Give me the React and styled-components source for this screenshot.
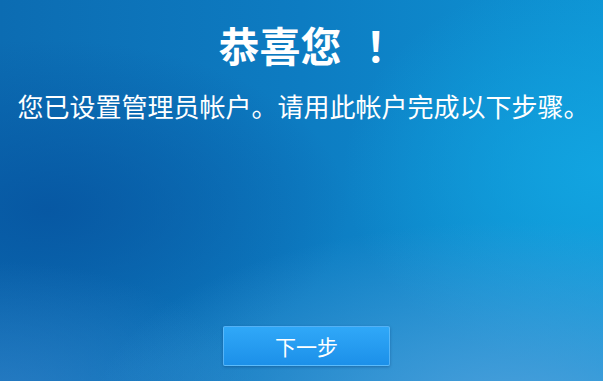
import React from 'react';
import styled, { createGlobalStyle } from 'styled-components';

const GlobalStyle = createGlobalStyle`
  html, body {
    margin: 0;
    padding: 0;
    height: 100%;
  }
  #root {
    height: 100%;
  }
`;

const Screen = styled.div`
  height: 381px;
  width: 603px;
  overflow: hidden;
  display: flex;
  flex-direction: column;
  align-items: center;
  font-family: "Microsoft YaHei", "Noto Sans CJK SC", "Noto Sans", sans-serif;
  color: #fff;
  background:
    radial-gradient(ellipse 420px 190px at 85% 108%, rgba(78, 160, 220, 0.95), rgba(78, 160, 220, 0) 100%),
    radial-gradient(ellipse 260px 150px at 0% 108%, rgba(48, 128, 200, 0.8), rgba(48, 128, 200, 0) 100%),
    radial-gradient(ellipse 300px 170px at 8% 55%, rgba(6, 84, 160, 0.85), rgba(6, 84, 160, 0) 100%),
    radial-gradient(ellipse 260px 200px at 100% 45%, rgba(18, 166, 226, 0.9), rgba(18, 166, 226, 0) 100%),
    linear-gradient(to right, #0c6cb2 0%, #0d7cc2 50%, #0e94d4 100%);
`;

const Title = styled.h1`
  margin: 16px 0 0 22px;
  font-size: 41px;
  line-height: 56px;
  font-weight: 700;
`;

const Bang = styled.span`
  display: inline-block;
  padding-left: 24px;
`;

const Subtitle = styled.p`
  margin: 17px 0 0 4px;
  font-size: 26px;
  line-height: 34px;
  font-weight: 400;
  white-space: nowrap;
`;

const Footer = styled.div`
  margin-top: auto;
  margin-left: 10px;
  padding-bottom: 15px;
  display: flex;
  justify-content: center;
`;

const NextButton = styled.button`
  width: 167px;
  height: 40px;
  border: 1px solid rgba(120, 200, 255, 0.6);
  border-radius: 2px;
  background: linear-gradient(to bottom, #30a8f8 0%, #1c90e9 100%);
  box-shadow: 0 1px 3px rgba(0, 40, 90, 0.35);
  color: #fff;
  font-family: inherit;
  font-size: 21px;
  padding: 0;
  cursor: pointer;
`;

export default function App() {
  return (
    <>
      <GlobalStyle />
      <Screen>
        <Title>
          恭喜您<Bang>！</Bang>
        </Title>
        <Subtitle>您已设置管理员帐户。请用此帐户完成以下步骤。</Subtitle>
        <Footer>
          <NextButton>下一步</NextButton>
        </Footer>
      </Screen>
    </>
  );
}
